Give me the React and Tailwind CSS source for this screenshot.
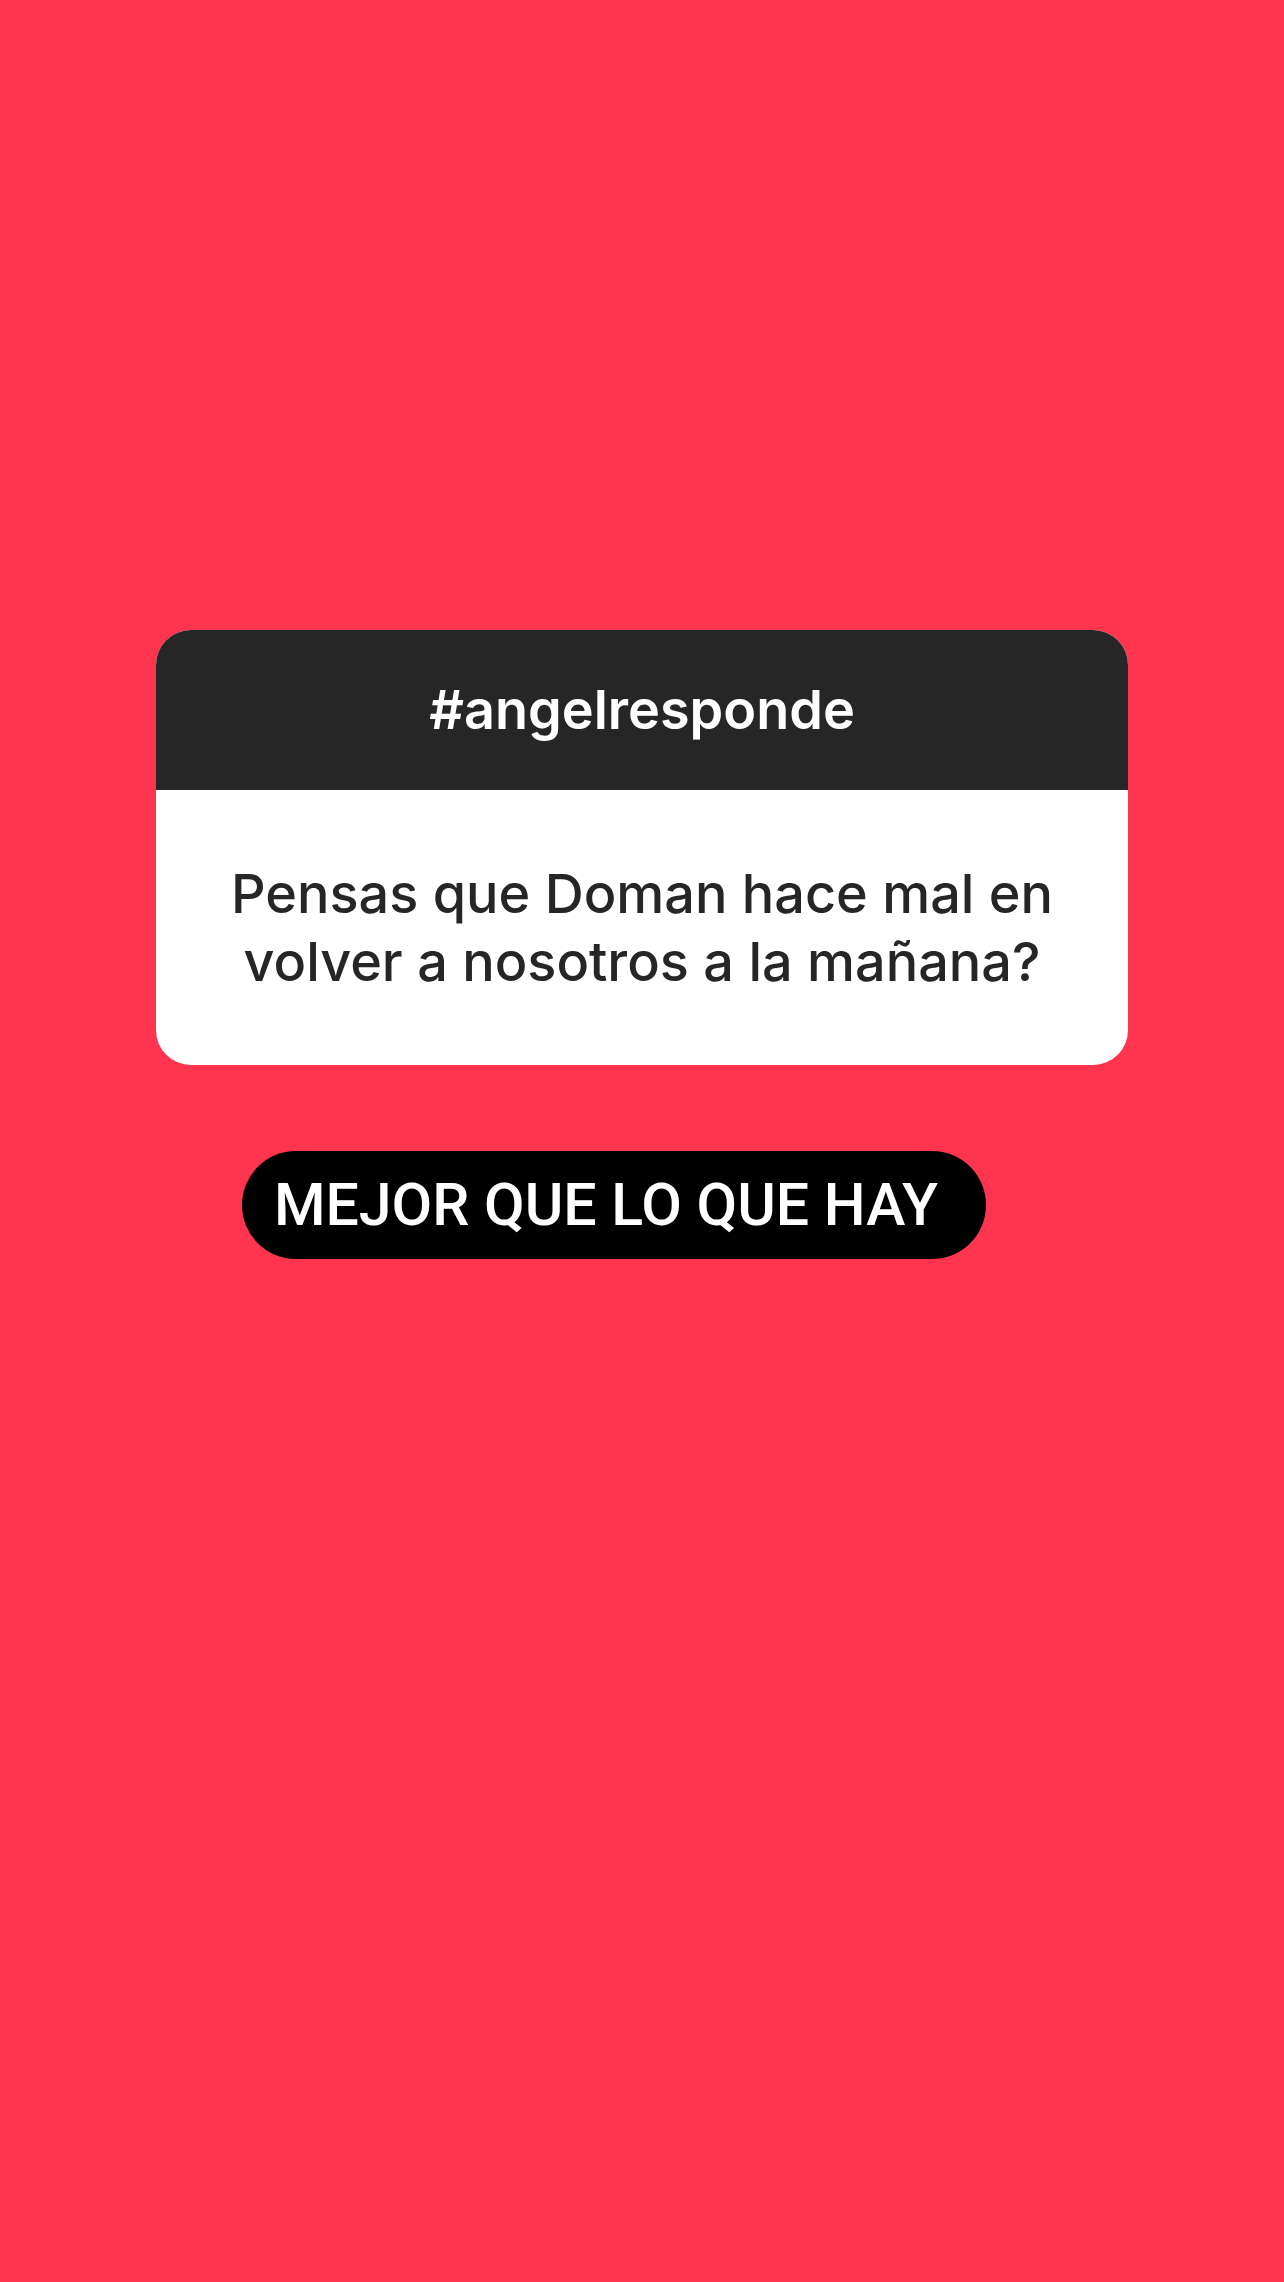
import React from 'react';

export default function App() {
  return (
    <main className="flex min-h-screen flex-col items-center bg-[#ff3550] px-[156px] pt-[630px] font-[Inter,sans-serif]">
      {/* Question card */}
      <section className="w-full overflow-hidden rounded-[35px] bg-white text-center">
        <h1 className="bg-[#262626] py-12 text-[54px] leading-[64px] font-semibold text-white">#angelresponde</h1>
        <p className="px-14 pt-[70px] pb-[69px] text-[54px] leading-[68px] font-medium text-[#262626]">
          Pensas que Doman hace mal en volver a nosotros a la mañana?
        </p>
      </section>

      {/* Answer */}
      <p className="mt-[86px] mr-[56px] rounded-[54px] bg-black pr-12 pl-8 text-[59px] leading-[108px] font-medium text-white font-[Roboto,sans-serif]">
        MEJOR QUE LO QUE HAY
      </p>
    </main>
  );
}
